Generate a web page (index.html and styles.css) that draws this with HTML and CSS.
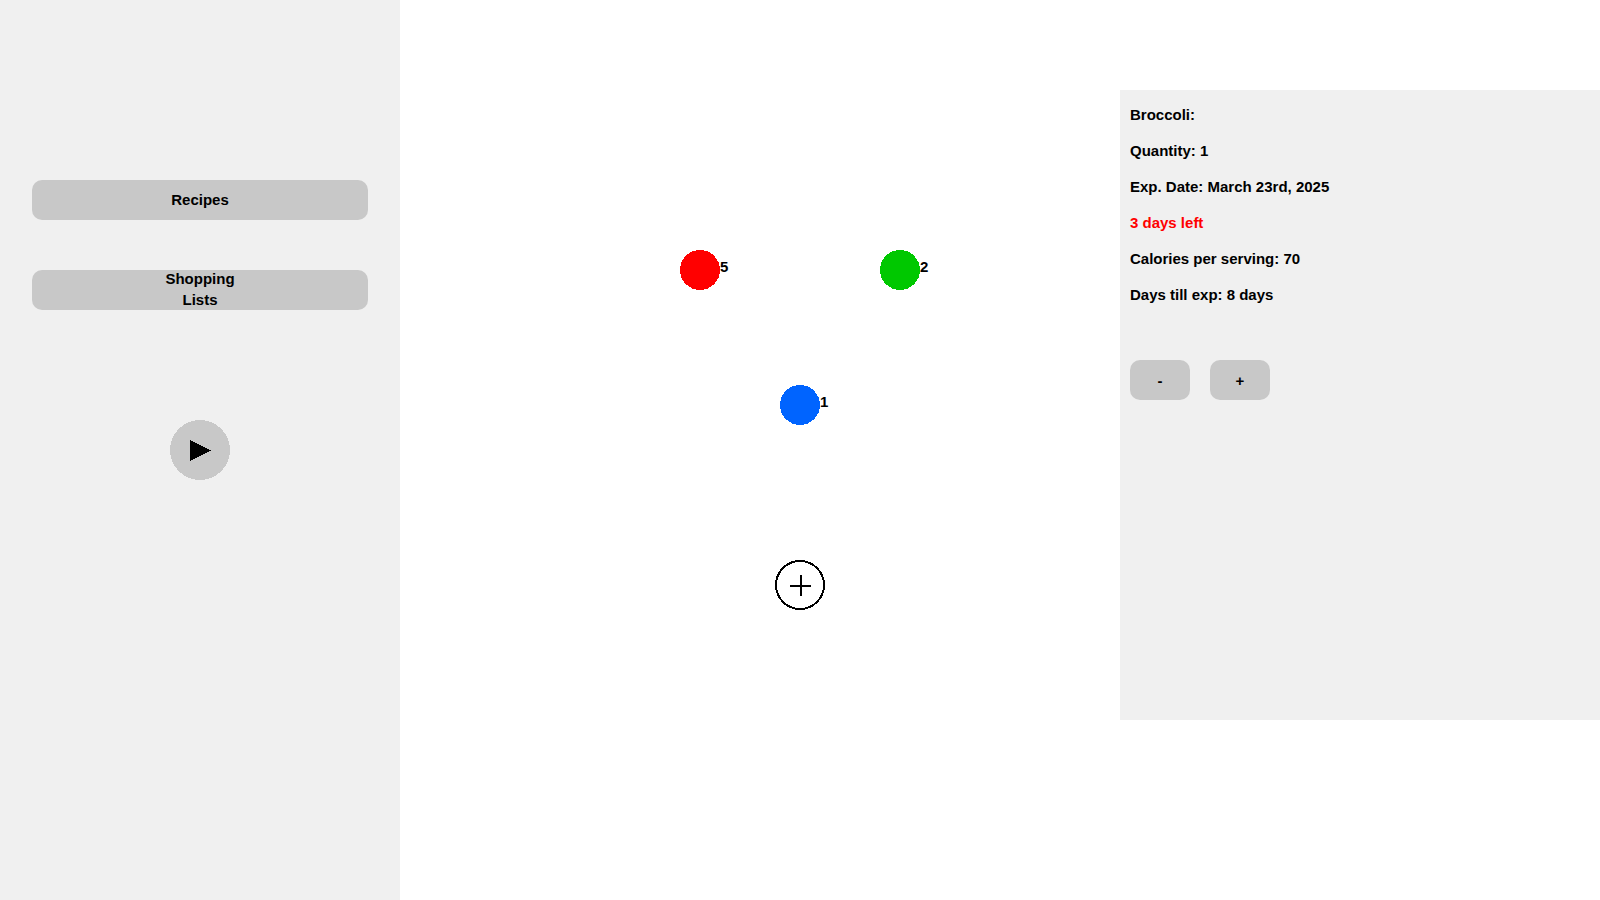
FILE: index.html
```html
<!DOCTYPE html>
<html lang="en">
<head>
<meta charset="utf-8">
<title>Food inventory</title>
<link rel="stylesheet" href="styles.css">
</head>
<body>
<div class="layout">
  <nav class="sidebar">
    <button class="btn nav-btn" type="button">Recipes</button>
    <button class="btn nav-btn" type="button">Shopping<br>Lists</button>
    <button class="play" type="button" aria-label="Play">
      <svg width="60" height="60" viewBox="0 0 60 60" shape-rendering="crispEdges"><circle cx="30" cy="30" r="30" fill="#c8c8c8"/><path d="M20 20L41 30.5L20 41Z"/></svg>
    </button>
  </nav>
  <main class="canvas">
    <button class="item item-red" type="button">
      <svg width="40" height="40" viewBox="0 0 40 40" shape-rendering="crispEdges"><circle cx="20" cy="20" r="20" fill="#ff0000"/></svg><span class="count">5</span>
    </button>
    <button class="item item-green" type="button">
      <svg width="40" height="40" viewBox="0 0 40 40" shape-rendering="crispEdges"><circle cx="20" cy="20" r="20" fill="#00c800"/></svg><span class="count">2</span>
    </button>
    <button class="item item-blue" type="button">
      <svg width="40" height="40" viewBox="0 0 40 40" shape-rendering="crispEdges"><circle cx="20" cy="20" r="20" fill="#0064ff"/></svg><span class="count">1</span>
    </button>
    <button class="add" type="button" aria-label="Add item">
      <svg width="50" height="50" viewBox="0 0 50 50" shape-rendering="crispEdges"><circle cx="25" cy="25" r="24" fill="none" stroke="#000" stroke-width="2"/><path d="M15 25h21v2H15zM25 15h2v21h-2z"/></svg>
    </button>
  </main>
  <aside class="details">
    <p>Broccoli:</p>
    <p>Quantity: 1</p>
    <p>Exp. Date: March 23rd, 2025</p>
    <p class="warning">3 days left</p>
    <p>Calories per serving: 70</p>
    <p>Days till exp: 8 days</p>
    <div class="stepper">
      <button class="btn step-btn" type="button">-</button>
      <button class="btn step-btn" type="button">+</button>
    </div>
  </aside>
</div>
</body>
</html>
```
FILE: styles.css
```css
* { box-sizing: border-box; }

body {
  margin: 0;
  background: #fff;
  color: #000;
  font: bold 15px/21px "Liberation Sans", Arial, sans-serif;
}

button {
  padding: 0;
  border: 0;
  background: none;
  color: inherit;
  font: inherit;
  cursor: pointer;
}

svg { display: block; }

.layout {
  position: relative;
  display: flex;
  min-height: 100vh;
}

.sidebar {
  display: flex;
  flex-direction: column;
  align-items: center;
  gap: 50px;
  width: 25%;
  padding: 180px 2% 0;
  background: #f0f0f0;
}

.btn {
  height: 40px;
  border-radius: 10px;
  background: #c8c8c8;
}

.nav-btn {
  display: flex;
  align-items: center;
  justify-content: center;
  width: 100%;
  padding-bottom: 2px;
}

.play { margin-top: 60px; }

.canvas { flex: 1; }

.item {
  position: absolute;
  display: flex;
  align-items: center;
  height: 40px;
  margin: -20px 0 0 -20px;
}

.item-red { left: 43.75%; top: 30%; }
.item-green { left: 56.25%; top: 30%; }
.item-blue { left: 50%; top: 45%; }

.count { padding-bottom: 8px; }

.add {
  position: absolute;
  left: 50%;
  top: 65%;
  margin: -25px 0 0 -25px;
}

.details {
  width: 30%;
  height: 70vh;
  margin-top: 10vh;
  padding: 7px 10px;
  background: #f0f0f0;
}

.details p {
  margin: 0;
  line-height: 36px;
}

.details .warning { color: #ff0000; }

.stepper {
  display: flex;
  gap: 20px;
  margin-top: 47px;
}

.step-btn { width: 60px; }
```
